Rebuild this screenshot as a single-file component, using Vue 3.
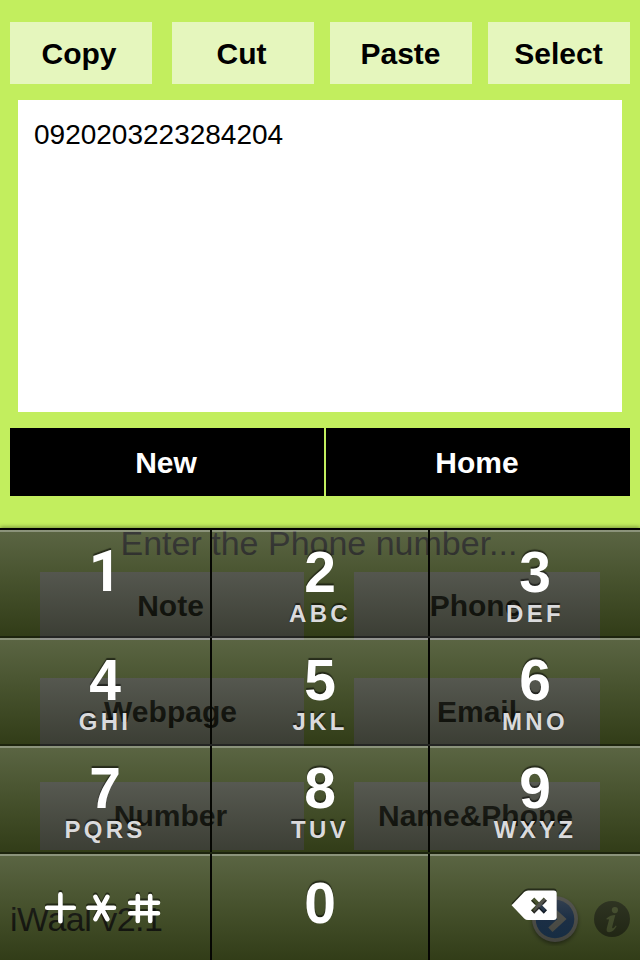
<script setup>
const edits = ['Copy', 'Cut', 'Paste', 'Select']
const kinds = ['Note', 'Phone', 'Webpage', 'Email', 'Number', 'Name&Phone']
const rows = [
  [['1', ''], ['2', 'ABC'], ['3', 'DEF']],
  [['4', 'GHI'], ['5', 'JKL'], ['6', 'MNO']],
  [['7', 'PQRS'], ['8', 'TUV'], ['9', 'WXYZ']],
]
</script>

<template>
  <main class="screen">
    <nav class="edits">
      <button v-for="e in edits" :key="e" class="edit">{{ e }}</button>
    </nav>
    <div class="field">0920203223284204</div>
    <div class="actions">
      <button class="action new">New</button>
      <button class="action home">Home</button>
    </div>
    <p class="prompt">Enter the Phone number...</p>
    <div class="kinds">
      <button v-for="k in kinds" :key="k" class="kind">{{ k }}</button>
    </div>
    <footer class="footer">
      <span class="version">iWaal v2.1</span>
      <svg class="go" width="54" height="54" viewBox="-27 -27 54 54">
        <defs>
          <linearGradient id="blue" x1="0" y1="0" x2="0" y2="1">
            <stop offset="0" stop-color="#5a8ef0" />
            <stop offset=".5" stop-color="#1263e6" />
            <stop offset="1" stop-color="#1c7cff" />
          </linearGradient>
        </defs>
        <circle class="go-ring" r="23" fill="#f4f0f0" />
        <circle r="19.3" fill="url(#blue)" />
        <path d="M-4.2 -10.3 L7 0 L-4.6 10.8" fill="none" stroke="#f4f0f0" stroke-width="6.2" />
      </svg>
      <svg class="info" width="36" height="36" viewBox="-18 -18 36 36">
        <circle r="18" fill="#000" fill-opacity=".62" />
        <circle cx="2.9" cy="-8.9" r="3.1" fill="#c4e773" />
        <path d="M-5.6 -0.6Q-1.5 -4 3.3 -4L0.3 7.6Q-0.3 10 1.4 9Q2.6 8.2 3.8 6.6L4.6 7.3Q1.2 13.2 -2.8 13.2Q-6.2 13.2 -5.2 9.2L-3.1 1.2Q-2.7 -0.5 -5.2 0.6Z" fill="#c4e773" />
      </svg>
    </footer>

    <section class="keypad">
      <div v-for="(row, i) in rows" :key="i" class="row">
        <button v-for="[digit, letters] in row" :key="digit" class="key">
          <span class="digit" :class="{ one: digit === '1' }">{{ digit }}</span>
          <span class="letters">{{ letters }}</span>
        </button>
      </div>
      <div class="row">
        <button class="key symbols" aria-label="Symbols">
          <svg width="120" height="36" viewBox="42 890 120 36">
            <g fill="none" stroke-width="4.6" stroke-linecap="round">
              <path v-for="s in 2" :key="s" :class="s === 1 ? 'shade' : 'ink'" d="M47.2 907.8H73.8M60.4 894.4V921.2M88.4 907.8H114M95.4 896.8L107.4 919.2M107.4 896.8L95.4 919.2M137.8 896V921M150.2 896V921M130.2 902.8H158M130.2 913.3H158" />
            </g>
          </svg>
        </button>
        <button class="key zero"><span class="digit">0</span></button>
        <button class="key delete" aria-label="Delete">
          <svg width="46" height="34" viewBox="511 888 46 34">
            <defs>
              <mask id="cut" maskUnits="userSpaceOnUse" x="505" y="880" width="60" height="50">
                <rect x="505" y="880" width="60" height="50" fill="#fff" />
                <path d="M532.6 899.2L545.4 912M545.4 899.2L532.6 912" stroke="#000" stroke-width="4.6" />
              </mask>
            </defs>
            <path v-for="s in 2" :key="s" :class="s === 1 ? 'shade-fill' : 'ink-fill'" mask="url(#cut)" d="M511.6 905.2L524.2 892Q525.8 890.4 528 890.4H553.7Q556.7 890.4 556.7 893.4V917Q556.7 920 553.7 920H528Q525.8 920 524.2 918.4Z" />
          </svg>
        </button>
      </div>
    </section>
  </main>
</template>

<style>
body {
  margin: 0;
}
</style>

<style scoped>
.screen {
  position: relative;
  box-sizing: border-box;
  width: 640px;
  height: 960px;
  padding-top: 22px;
  overflow: hidden;
  background: #c2ee5e;
  font-family: "Liberation Sans", Arial, sans-serif;
  color: #000;
}
button {
  display: block;
  box-sizing: border-box;
  margin: 0;
  padding: 0;
  border: 0;
  background: none;
  font: bold 30px "Liberation Sans", Arial, sans-serif;
  color: inherit;
}
.edits {
  display: flex;
  gap: 16px;
  padding: 0 10px;
}
.edit {
  width: 142px;
  height: 62px;
  padding-top: 1px;
  padding-right: 1px;
  background: #e5f6bd;
}
.edit:first-child {
  margin-right: 4px;
  padding-right: 4px;
}
.edit:nth-child(2) {
  padding-right: 3px;
}
.field {
  box-sizing: border-box;
  height: 312px;
  margin: 16px 18px;
  padding: 19px 16px;
  background: #fff;
  font-size: 28px;
  line-height: 32px;
}
.actions {
  display: flex;
  gap: 2px;
  padding: 0 10px;
}
.action {
  height: 68px;
  padding-top: 1px;
  padding-right: 2px;
  background: #000;
  color: #fff;
}
.new {
  width: 314px;
}
.home {
  width: 304px;
}
.prompt {
  margin: 27px 0 9px;
  padding-right: 2px;
  font-size: 34px;
  line-height: 40px;
  text-align: center;
  color: #2c2c30;
}
.kinds {
  display: grid;
  grid-template-columns: 264px 246px;
  grid-template-rows: 106px 104px 68px;
  column-gap: 50px;
  padding: 0 40px;
}
.kind {
  height: 68px;
  padding-right: 3px;
  background: #f1f5e6;
}
.kind:nth-child(4) {
  padding-right: 0;
}
.footer {
  display: flex;
  align-items: center;
  height: 54px;
  margin-top: 42px;
  padding: 0 10px;
}
.version {
  flex: 1;
  font-size: 34px;
  line-height: 54px;
  letter-spacing: -0.5px;
}
.go {
  margin-right: 12px;
}
.go-ring {
  filter: drop-shadow(0 2px 2px rgba(0, 0, 0, 0.6));
}
.keypad {
  position: absolute;
  left: 0;
  bottom: 0;
  width: 640px;
  height: 432px;
  box-shadow: 0 -1px 4px rgba(0, 0, 0, 0.4);
}
.row {
  display: grid;
  grid-template-columns: 210px 216px 210px;
  column-gap: 2px;
  box-sizing: border-box;
  height: 108px;
  border-top: 2px solid rgba(0, 0, 0, 0.85);
  background: linear-gradient(rgba(62, 63, 60, 0.78), rgba(36, 38, 31, 0.785) 50%, rgba(11, 13, 5, 0.79)) padding-box;
}
.row:first-child {
  border-top-color: #000;
}
.key {
  height: 106px;
  border-top: 2px solid rgba(255, 255, 255, 0.3);
  box-shadow: 2px 0 #050602;
  color: #fff;
  text-align: center;
  text-shadow: 0 -2px 1px rgba(0, 0, 0, 0.55);
}
.key:last-child {
  box-shadow: none;
}
.digit {
  display: block;
  height: 56px;
  margin-top: 3px;
  font-size: 57px;
  line-height: 56px;
}
.one {
  font-family: Roboto, "Liberation Sans", sans-serif;
}
.zero .digit {
  margin-top: -11px;
}
.letters {
  display: block;
  height: 28px;
  font-size: 24px;
  line-height: 28px;
  letter-spacing: 3.3px;
  color: #dadadc;
}
.symbols svg {
  display: block;
  margin: 0 0 0 42px;
}
.delete svg {
  display: block;
  margin: 0 0 6px 81px;
  overflow: visible;
}
.shade {
  stroke: rgba(0, 0, 0, 0.5);
  transform: translateY(-2px);
}
.ink {
  stroke: #fff;
}
.shade-fill {
  fill: rgba(0, 0, 0, 0.5);
  transform: translateY(-2px);
}
.ink-fill {
  fill: #fff;
}
</style>
